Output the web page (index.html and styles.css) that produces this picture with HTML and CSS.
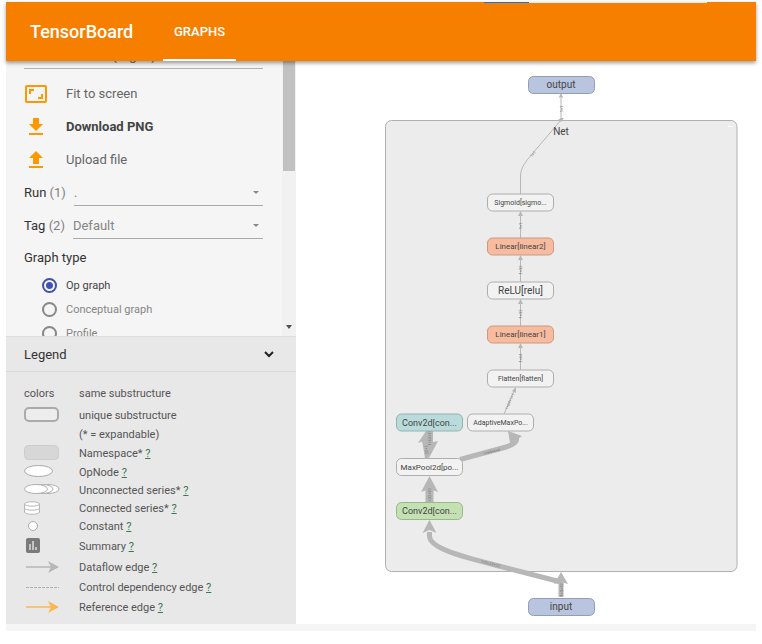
FILE: index.html
```html
<!DOCTYPE html>
<html lang="en">
<head>
<meta charset="utf-8">
<title>TensorBoard</title>
<link rel="stylesheet" href="styles.css">
</head>
<body>
<div class="app">
  <header class="topbar">
    <div class="loader"><span class="loader-done"></span></div>
    <h1 class="brand">TensorBoard</h1>
    <nav class="tabs"><a class="tab" href="#graphs">GRAPHS</a></nav>
  </header>
  <div class="workspace">
    <aside class="side">
      <div class="scroller">
        <form class="controls">
          <input class="search" type="text" aria-label="Search nodes" value="Search nodes (regex)">
          <button class="action" type="button">
            <svg class="action-icon" viewBox="0 0 24 24"><path fill="none" stroke="currentColor" stroke-width="2" d="M3 4h18a1 1 0 0 1 1 1v14a1 1 0 0 1-1 1H3a1 1 0 0 1-1-1V5a1 1 0 0 1 1-1z"/><path fill="currentColor" d="M5 7h5v2H7v3H5zM19 17h-5v-2h3v-3h2z"/></svg>
            Fit to screen
          </button>
          <button class="action action-strong" type="button">
            <svg class="action-icon" viewBox="0 0 24 24"><path fill="currentColor" d="M9 3h6v6h4l-7 7-7-7h4zM5 18h14v2H5z"/></svg>
            Download PNG
          </button>
          <button class="action" type="button">
            <svg class="action-icon" viewBox="0 0 24 24"><path fill="currentColor" d="M9 16h6v-6h4l-7-7-7 7h4zM5 18h14v2H5z"/></svg>
            Upload file
          </button>
          <div class="field">
            <label class="field-name" for="run">Run <span class="count">(1)</span></label>
            <span class="picker"><select id="run"><option>.</option></select></span>
          </div>
          <div class="field">
            <label class="field-name" for="tag">Tag <span class="count">(2)</span></label>
            <span class="picker"><select id="tag"><option>Default</option></select></span>
          </div>
          <fieldset class="types">
            <legend class="types-title">Graph type</legend>
            <label class="type type-on"><input type="radio" name="type" checked>Op graph</label>
            <label class="type"><input type="radio" name="type">Conceptual graph</label>
            <label class="type"><input type="radio" name="type">Profile</label>
          </fieldset>
        </form>
        <div class="scrollbar"><span class="thumb"></span><span class="down"></span></div>
      </div>
      <section class="legend">
        <button class="legend-head" type="button">Legend
          <svg class="chevron" viewBox="0 0 10 7"><path fill="none" stroke="currentColor" stroke-width="2" d="M1 1l4 4 4-4"/></svg>
        </button>
        <div class="legend-body">
          <div class="item item-first"><span class="key">colors</span><span>same substructure</span></div>
          <div class="item item-box"><span class="key"><svg width="36" height="16"><rect x="1" y="1" width="33" height="13" rx="4" fill="#ededed" stroke="#aaa" stroke-width="2"/></svg></span><span>unique substructure</span></div>
          <div class="item"><span class="key"></span><span>(* = expandable)</span></div>
          <div class="item item-box"><span class="key"><svg width="36" height="16"><rect x="0.5" y="0.5" width="34" height="14" rx="4" fill="#d7d7d7" stroke="#ccc"/></svg></span><span>Namespace* <a href="#namespace">?</a></span></div>
          <div class="item"><span class="key"><svg width="36" height="14"><ellipse cx="14.5" cy="6" rx="14" ry="5.5" fill="#fff" stroke="#aaa"/></svg></span><span>OpNode <a href="#opnode">?</a></span></div>
          <div class="item"><span class="key"><svg width="36" height="12"><g fill="#fff" stroke="#b0b0b0"><ellipse cx="24" cy="5" rx="11" ry="4.5"/><ellipse cx="18" cy="5" rx="11" ry="4.5"/><ellipse cx="12" cy="5" rx="11.5" ry="4.5"/></g></svg></span><span>Unconnected series* <a href="#unconnected">?</a></span></div>
          <div class="item"><span class="key"><svg width="36" height="14"><g fill="#fff" stroke="#b8b8b8"><path d="M0.500 3v8c0 3 15 3 15 0V3"/><path d="M0.500 7c0 3 15 3 15 0" /><ellipse cx="8" cy="3" rx="7.500" ry="2.200"/></g></svg></span><span>Connected series* <a href="#connected">?</a></span></div>
          <div class="item"><span class="key"><svg width="36" height="12"><circle cx="9" cy="6" r="4.500" fill="#fff" stroke="#aaa"/></svg></span><span>Constant <a href="#constant">?</a></span></div>
          <div class="item item-summary"><span class="key"><svg width="36" height="18"><rect x="2" y="1" width="14" height="15" rx="2" fill="#7a7a7a"/><path d="M6 7v6M9 4v9M12 10v3" stroke="#ddd" stroke-width="1.500"/></svg></span><span>Summary <a href="#summary">?</a></span></div>
          <div class="item item-box"><span class="key"><svg width="36" height="12"><path d="M2 6h25" stroke="#b7b7b7" stroke-width="1.500"/><path d="M24 0l11 6-11 6 3-6z" fill="#b7b7b7"/></svg></span><span>Dataflow edge <a href="#dataflow">?</a></span></div>
          <div class="item item-box"><span class="key"><svg width="36" height="12"><path d="M2 6.500h33" stroke="#b0b0b0" stroke-dasharray="3 1"/></svg></span><span>Control dependency edge <a href="#control">?</a></span></div>
          <div class="item item-box"><span class="key"><svg width="36" height="12"><path d="M2 6h25" stroke="#ffb74d" stroke-width="1.500"/><path d="M24 0l11 6-11 6 3-6z" fill="#ffb74d"/></svg></span><span>Reference edge <a href="#reference">?</a></span></div>
        </div>
      </section>
    </aside>
    <main class="stage">
      <svg class="graph" viewBox="296 61 460 563" role="img" aria-label="Model graph">
        <rect x="385.500" y="120.500" width="351.500" height="451" rx="6" fill="#ececec" stroke="#b0b0b0"/>
        <path d="M728 126.500h5" stroke="#fff"/>
        <g fill="none" stroke="#b7b7b7">
          <path d="M561 120V96M520.500 194V176C520.500 167 527 160 533 153L561 120M520.500 238V212M520.500 282V257M520.500 326V301M520.500 370V345M504 414L514 391"/>
          <g stroke-width="5">
            <path d="M460 459.500L506 447Q519 443 516 437"/>
            <path d="M427 458L424 440" stroke-width="4"/>
            <path d="M429.500 431V446" stroke-width="7"/>
            <path d="M429.500 502V488" stroke-width="8"/>
            <path d="M561 597V582" stroke-width="5"/>
            <path d="M561 582L495 565C460 556 429.500 548 429.500 536V532"/>
          </g>
        </g>
        <g fill="#b7b7b7">
          <path d="M561 93l-2.500 5 2.500-1 2.500 1zM561 118l-3 2 3 2 3-4zM520.500 211l-2.500 5h5zM520.500 255l-2.500 5h5zM520.500 299l-2.500 5h5zM520.500 343l-2.500 5h5zM516 387l-4 4 4 2z"/>
          <path d="M508 431l14 5-4 3-8 4z"/>
          <path d="M426 431l-8 12 6-2 4 2z"/>
          <path d="M429 458l-7-17 7 2 9-2z"/>
          <path d="M429.500 476l-8.500 16 8.500-3 8.500 3z"/>
          <path d="M429.500 520l-7 13 7-3 7 3z"/>
          <path d="M561 572l-7 12 7-2 7 2z"/>
        </g>
        <g class="edge-label">
          <text transform="translate(563 109) rotate(-90)">1×1</text>
          <text transform="translate(534 155) rotate(-48)">1×1</text>
          <text transform="translate(522 226) rotate(-90)">1×1</text>
          <text transform="translate(522 270) rotate(-90)">1×32</text>
          <text transform="translate(522 314) rotate(-90)">1×32</text>
          <text transform="translate(522 358) rotate(-90)">1×64</text>
          <text transform="translate(511 402) rotate(-66)">1×64×1×1</text>
          <text transform="translate(492 453) rotate(-14)">1×64×6×6</text>
          <text transform="translate(431 438) rotate(-90)">1×64×13</text>
          <text transform="translate(425 450) rotate(84)">1×32</text>
          <text transform="translate(431 496) rotate(-90)">1×32×30</text>
          <text transform="translate(490 565) rotate(15)">1×3×32×32</text>
          <text transform="translate(563 590) rotate(-90)">1×3×32</text>
        </g>
        <g class="node">
          <g fill="#b9c4df" stroke="#929db8"><rect x="528.500" y="76.500" width="66" height="17" rx="5"/><rect x="528.500" y="598.500" width="66" height="17" rx="5"/></g>
          <g fill="#f7bb9f" stroke="#cf977e"><rect x="487.500" y="238" width="66" height="17" rx="5"/><rect x="487.500" y="326" width="66" height="17" rx="5"/></g>
          <g fill="#f2f2f2" stroke="#aeaeae"><rect x="487.500" y="194" width="66" height="17" rx="5"/><rect x="487.500" y="282" width="66" height="17" rx="5"/><rect x="487.500" y="370" width="66" height="17" rx="5"/><rect x="467.500" y="414" width="66" height="17" rx="5"/><rect x="396.500" y="458.500" width="66" height="17" rx="5"/></g>
          <rect x="396.500" y="414" width="66" height="17" rx="5" fill="#badbdb" stroke="#94b2b2"/>
          <rect x="396.500" y="502.500" width="66" height="17" rx="5" fill="#c3e1b2" stroke="#9bb88b"/>
        </g>
        <g class="node-label">
          <text x="561" y="88">output</text>
          <text x="561" y="135">Net</text>
          <text x="520.500" y="294">ReLU[relu]</text>
          <text x="561" y="610">input</text>
          <g class="large"><text x="429.500" y="426">Conv2d[con...</text><text x="429.500" y="514">Conv2d[con...</text></g>
          <g class="mid">
            <text x="429.500" y="470">MaxPool2d[po...</text>
            <text x="520.500" y="249">Linear[linear2]</text>
            <text x="520.500" y="337">Linear[linear1]</text>
          </g>
          <g class="small">
            <text x="520.500" y="205">Sigmoid[sigmo...</text>
            <text x="520.500" y="381">Flatten[flatten]</text>
            <text x="500.500" y="425">AdaptiveMaxPo...</text>
          </g>
        </g>
      </svg>
    </main>
  </div>
  <footer class="strip"></footer>
</div>
</body>
</html>
```
FILE: styles.css
```css
* { box-sizing: border-box; }

body {
  margin: 0;
  background: #fff;
  color: #333;
  font-family: Roboto, "Liberation Sans", sans-serif;
  font-size: 13px;
}

button, input, select { font: inherit; color: inherit; }

.app {
  display: flex;
  flex-direction: column;
  height: 100vh;
  padding: 2px 6px 13px;
}

.topbar {
  position: relative;
  z-index: 1;
  display: flex;
  flex: none;
  align-items: stretch;
  height: 59px;
  padding-left: 24px;
  background: #f77f00;
  color: #fff;
  box-shadow: 0 2px 4px rgba(0, 0, 0, 0.4);
}

.loader {
  position: absolute;
  top: 0;
  right: 49px;
  width: 223px;
  height: 1px;
  background: #eee;
}

.loader-done {
  display: block;
  width: 20%;
  height: 1px;
  background: #1a73d9;
}

.brand {
  margin: 0;
  width: 133px;
  font-size: 18px;
  font-weight: 500;
  line-height: 59px;
}

.tab {
  display: block;
  height: 59px;
  padding: 0 11px;
  border-bottom: 2px solid #fff;
  color: #fff;
  font-weight: 500;
  line-height: 59px;
  text-decoration: none;
}

.workspace {
  display: flex;
  flex: 1;
  min-height: 0;
}

.side {
  display: flex;
  flex: none;
  flex-direction: column;
  width: 290px;
  background: #f5f5f5;
}

.scroller {
  display: flex;
  flex: 1;
  min-height: 0;
  overflow: hidden;
}

.controls {
  flex: 1;
  min-width: 0;
  margin-top: -17px;
  padding: 0 19px 0 18px;
}

.search {
  display: block;
  width: 100%;
  height: 25px;
  margin-bottom: 8px;
  padding: 0 0 3px;
  border: 0;
  border-bottom: 1px solid #b0b0b0;
  border-radius: 0;
  background: none;
  color: #777;
  font-size: 14px;
}

.action {
  display: flex;
  align-items: center;
  gap: 18px;
  width: 100%;
  height: 33px;
  padding: 0;
  border: 0;
  background: none;
  color: #666;
  text-align: left;
}

.action-strong { color: #444; font-weight: 700; }

.action-icon { width: 24px; height: 24px; color: #ff9800; }

.field {
  display: flex;
  align-items: center;
  gap: 8px;
  height: 33px;
}

.count { color: #808080; }

.picker {
  position: relative;
  flex: 1;
  height: 27px;
  border-bottom: 1px solid #aaa;
}

.picker::after {
  content: "";
  position: absolute;
  top: 12px;
  right: 4px;
  border: 3px solid transparent;
  border-top-color: #888;
  border-bottom: 0;
}

.picker select {
  width: 100%;
  height: 27px;
  padding: 0;
  border: 0;
  background: none;
  color: #858585;
  appearance: none;
}

.types {
  margin: 0;
  padding: 0;
  border: 0;
}

.types-title {
  height: 31px;
  padding: 0;
  line-height: 32px;
}

.type {
  display: flex;
  align-items: center;
  gap: 9px;
  height: 24px;
  padding-left: 18px;
  color: #858585;
  font-size: 11px;
}

.type-on { color: #444; }

.type input {
  width: 15px;
  height: 15px;
  margin: 0;
  border: 2px solid #888;
  border-radius: 50%;
  appearance: none;
}

.type input:checked {
  border-color: #3f51b5;
  background: radial-gradient(circle, #3f51b5 0 3px, transparent 4px);
}

.scrollbar {
  display: flex;
  flex: none;
  flex-direction: column;
  align-items: center;
  justify-content: space-between;
  width: 14px;
  padding-bottom: 7px;
  background: #f1f1f1;
}

.thumb { width: 12px; height: 41%; background: #c1c1c1; }

.down {
  border: 3px solid transparent;
  border-top: 4px solid #505050;
  border-bottom: 0;
}

.legend { flex: none; background: #e8e8e8; color: #555; }

.legend-head {
  display: flex;
  align-items: center;
  justify-content: space-between;
  width: 100%;
  height: 36px;
  padding: 0 22px 0 18px;
  border: 0;
  border-top: 1px solid #ddd;
  border-bottom: 1px solid #d8d8d8;
  background: none;
  color: #333;
}

.chevron { width: 10px; height: 7px; color: #222; }

.legend-body { padding: 9px 18px 7px; font-size: 11px; }

.item {
  display: grid;
  grid-template-columns: 55px 1fr;
  align-items: center;
  height: 18px;
}

.item-box { height: 20px; }
.item-summary { height: 22px; }
.item-first { height: 24px; }
.key svg { display: block; }
.item a { color: #397653; }

.stage {
  flex: 1;
  min-width: 0;
  background: #fff;
}

.graph { display: block; width: 100%; height: 100%; }

.node-label { fill: #444; font-size: 10px; text-anchor: middle; }
.node-label .large { font-size: 9px; }
.node-label .mid { font-size: 8px; }
.node-label .small { font-size: 7px; }
.edge-label { fill: #777; font-size: 4px; text-anchor: middle; }

.strip { flex: none; height: 7px; background: #f5f5f5; }
```
